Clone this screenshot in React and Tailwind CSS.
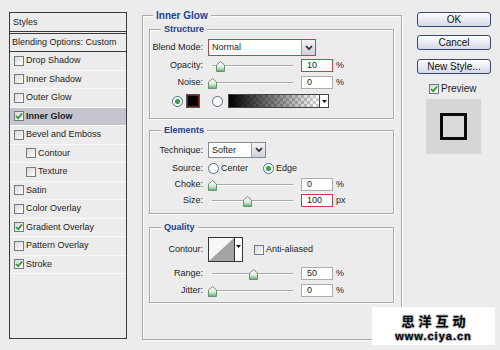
import React from "react";

const Check = ({ checked }) => (
    <span className="w-[10px] h-[10px] border border-[#707a84] bg-linear-to-br from-[#d8d8d8] to-white flex items-center justify-center shrink-0">
        {checked && (
            <svg width="8" height="8" viewBox="0 0 8 8">
                <path d="M1 4 L3.2 6.3 L7 1.4" fill="none" stroke="#1f9a2a" strokeWidth="1.7" />
            </svg>
        )}
    </span>
);

const Radio = ({ on }) => (
    <span className="w-[11px] h-[11px] rounded-full border border-[#4d6f8c] bg-white flex items-center justify-center shrink-0">
        {on && <span className="w-[5px] h-[5px] rounded-full bg-[#3aa048] shadow-[0_0_1px_#8fd39a]" />}
    </span>
);

// pos = thumb centre, px from the slider's left edge
const Slider = ({ pos }) => (
    <div className="relative w-[88px] h-[13px] shrink-0">
        <div className="absolute left-[4px] w-[81px] top-[6px] h-[2px] border-t border-[#a9a9a9] border-b border-b-white" />
        <svg className="absolute top-[2px]" style={{ left: pos - 4 }} width="9" height="11" viewBox="0 0 9 11">
            <defs>
                <linearGradient id="thumbg" x1="0" y1="0" x2="0" y2="1">
                    <stop offset="0" stopColor="#ffffff" />
                    <stop offset="0.6" stopColor="#d6e6d6" />
                    <stop offset="1" stopColor="#4fae5c" />
                </linearGradient>
            </defs>
            <path d="M4.5 0.5 L8.5 4 L8.5 10.5 L0.5 10.5 L0.5 4 Z" fill="url(#thumbg)" stroke="#6f8f74" strokeWidth="1" />
        </svg>
    </div>
);

const Num = ({ v, red }) => (
    <div className={red
        ? "ml-[5px] w-[32px] h-[13px] bg-white border border-[#c2404c] pl-[5px] flex items-center shrink-0"
        : "ml-[5px] w-[32px] h-[13px] bg-white border border-[#a7adb3] pl-[5px] flex items-center shrink-0"}>
        {v}
    </div>
);

const Drop = () => (
    <div className="w-[14px] h-full border-l border-[#9aa0aa] bg-linear-to-b from-[#f4f4f6] to-[#cfd2dc] flex items-center justify-center shrink-0">
        <svg width="8" height="6" viewBox="0 0 8 6">
            <path d="M1 1 L4 4.2 L7 1" fill="none" stroke="#333" strokeWidth="1.8" />
        </svg>
    </div>
);

const Row = ({ label, children, className = "" }) => (
    <div className={"flex items-center " + className}>
        <div className="w-[53px] text-right shrink-0 whitespace-nowrap">{label}</div>
        <div className="ml-[5px] flex items-center">{children}</div>
    </div>
);

const Group = ({ title, className = "", children, legend = "left-[11px] text-[9px]" }) => (
    <div className={"relative border border-[#a9a9a9] shadow-[inset_1px_1px_0_#fff,1px_1px_0_#fff] " + className}>
        <span className={"absolute -top-[6px] px-[3px] bg-[#ececec] font-bold text-[#1b3f93] leading-[11px] " + legend}>
            {title}
        </span>
        {children}
    </div>
);

const Btn = ({ children, className = "" }) => (
    <div className={"w-[74px] h-[15px] rounded-[3px] border border-[#3a4676] bg-linear-to-b from-white to-[#d4d8e6] flex items-center justify-center text-[10px] text-[#111] " + className}>
        {children}
    </div>
);

const styleItems = [
    { name: "Drop Shadow" },
    { name: "Inner Shadow" },
    { name: "Outer Glow" },
    { name: "Inner Glow", checked: true, active: true },
    { name: "Bevel and Emboss" },
    { name: "Contour", sub: true },
    { name: "Texture", sub: true },
    { name: "Satin" },
    { name: "Color Overlay" },
    { name: "Gradient Overlay", checked: true },
    { name: "Pattern Overlay" },
    { name: "Stroke", checked: true },
];

export default function App() {
    return (
        <div className="relative w-[500px] h-[350px] overflow-hidden bg-[#ececec] flex items-start font-['Liberation_Sans',Arial,sans-serif] text-[9px] leading-[11px] text-[#1c1c1c]">
            {/* styles list */}
            <div className="ml-[9px] mt-[12px] w-[118px] h-[327px] border border-[#3a3a3a] shrink-0">
                <div className="h-[19px] border-b border-[#3a3a3a] pl-[3px] flex items-center">Styles</div>
                <div className="mt-[1px] h-[19px] border-t border-b border-[#3a3a3a] pl-[2px] flex items-center">
                    Blending Options: Custom
                </div>
                {styleItems.map(item => (
                    <div
                        key={item.name}
                        className={[
                            "h-[18.5px] flex items-center gap-[2px] border-b border-[#f9f9f9]",
                            item.sub ? "pl-[16px]" : "pl-[4px]",
                            item.active ? "bg-[#c4c4ce] font-bold" : "",
                        ].join(" ")}
                    >
                        <Check checked={item.checked} />
                        <span>{item.name}</span>
                    </div>
                ))}
            </div>

            {/* Inner Glow */}
            <Group title="Inner Glow" legend="left-[10px] text-[10px]" className="ml-[15px] mt-[15px] w-[260px] h-[325px] pt-[13px] pl-[6px] shrink-0">
                <Group title="Structure" className="w-[245px] h-[90px] pt-[9px]">
                    <Row label="Blend Mode:" className="h-[17px]">
                        <div className="w-[108px] h-[17px] bg-white border border-[#c2404c] flex items-center justify-between">
                            <span className="pl-[3px]">Normal</span>
                            <Drop />
                        </div>
                    </Row>
                    <Row label="Opacity:" className="mt-[3px] h-[13px]">
                        <Slider pos={12} />
                        <Num v="10" red />
                        <span className="ml-[3px]">%</span>
                    </Row>
                    <Row label="Noise:" className="mt-[4px] h-[13px]">
                        <Slider pos={4} />
                        <Num v="0" />
                        <span className="ml-[3px]">%</span>
                    </Row>
                    <div className="mt-[5px] h-[14px] pl-[22px] flex items-center">
                        <Radio on />
                        <div className="ml-[3px] w-[14px] h-[14px] border border-[#555] bg-[#0a0000] shadow-[inset_0_0_0_1px_#7a1a1a]" />
                        <div className="ml-[12px]"><Radio /></div>
                        <div className="ml-[5px] w-[101px] h-[14px] border border-[#444] bg-white flex">
                            <svg width="90" height="12" viewBox="0 0 90 12" className="shrink-0">
                                <defs>
                                    <pattern id="chk" width="6" height="6" patternUnits="userSpaceOnUse">
                                        <rect width="6" height="6" fill="#fff" />
                                        <rect width="3" height="3" fill="#cfcfcf" />
                                        <rect x="3" y="3" width="3" height="3" fill="#cfcfcf" />
                                    </pattern>
                                    <linearGradient id="fade" x1="0" y1="0" x2="1" y2="0">
                                        <stop offset="0" stopColor="#000" stopOpacity="1" />
                                        <stop offset="1" stopColor="#000" stopOpacity="0" />
                                    </linearGradient>
                                </defs>
                                <rect width="90" height="12" fill="url(#chk)" />
                                <rect width="90" height="12" fill="url(#fade)" />
                            </svg>
                            <div className="flex-1 border-l border-[#444] flex items-center justify-center">
                                <svg width="5" height="3" viewBox="0 0 5 3"><path d="M0 0 H5 L2.5 3 Z" fill="#111" /></svg>
                            </div>
                        </div>
                    </div>
                </Group>

                <Group title="Elements" className="mt-[11px] w-[245px] h-[84px] pt-[11px]">
                    <Row label="Technique:" className="h-[16px]">
                        <div className="w-[58px] h-[16px] bg-white border border-[#7f8a96] flex items-center justify-between">
                            <span className="pl-[3px]">Softer</span>
                            <Drop />
                        </div>
                    </Row>
                    <Row label="Source:" className="mt-[4px] h-[12px]">
                        <Radio />
                        <span className="ml-[2px]">Center</span>
                        <div className="ml-[15px]"><Radio on /></div>
                        <span className="ml-[2px]">Edge</span>
                    </Row>
                    <Row label="Choke:" className="mt-[4px] h-[13px]">
                        <Slider pos={4} />
                        <Num v="0" />
                        <span className="ml-[3px]">%</span>
                    </Row>
                    <Row label="Size:" className="mt-[3px] h-[13px]">
                        <Slider pos={39} />
                        <Num v="100" red />
                        <span className="ml-[3px]">px</span>
                    </Row>
                </Group>

                <Group title="Quality" className="mt-[13px] w-[245px] h-[76px] pt-[9px]">
                    <Row label="Contour:" className="h-[25px]">
                        <div className="w-[35px] h-[25px] border border-[#333] bg-white flex">
                            <svg width="25" height="23" viewBox="0 0 25 23" className="shrink-0">
                                <rect width="25" height="23" fill="#f7f7f7" />
                                <path d="M0 23 L25 0 L25 23 Z" fill="#a4a4a8" />
                            </svg>
                            <div className="flex-1 border-l border-[#333] flex items-start justify-center pt-[7px]">
                                <svg width="5" height="3" viewBox="0 0 5 3"><path d="M0 0 H5 L2.5 3 Z" fill="#111" /></svg>
                            </div>
                        </div>
                        <div className="ml-[11px]"><Check /></div>
                        <span className="ml-[2px]">Anti-aliased</span>
                    </Row>
                    <Row label="Range:" className="mt-[5px] h-[13px]">
                        <Slider pos={45} />
                        <Num v="50" />
                        <span className="ml-[3px]">%</span>
                    </Row>
                    <Row label="Jitter:" className="mt-[4px] h-[13px]">
                        <Slider pos={4} />
                        <Num v="0" />
                        <span className="ml-[3px]">%</span>
                    </Row>
                </Group>
            </Group>

            {/* buttons + preview */}
            <div className="ml-[15px] mt-[12px] w-[74px] flex flex-col shrink-0">
                <Btn>OK</Btn>
                <Btn className="mt-[8px]">Cancel</Btn>
                <Btn className="mt-[9px]">New Style...</Btn>
                <div className="mt-[9px] pl-[12px] flex items-center gap-[2px] text-[10px]">
                    <Check checked />
                    <span>Preview</span>
                </div>
                <div className="mt-[5px] ml-[9px] w-[55px] h-[55px] bg-[#d6d6d6] flex items-center justify-center">
                    <div className="w-[27px] h-[27px] border-[3px] border-[#0a0a0a] bg-[#d9d9d9]" />
                </div>
            </div>

            {/* watermark */}
            <div className="absolute left-[372px] top-[307px] w-[123px] h-[38px] bg-white flex flex-col items-center pt-[6px]">
                <span className="block h-[15px] font-['Noto_Sans_CJK_SC',sans-serif] font-bold text-[13px] leading-[15px] tracking-[4px] pl-[4px] text-black [text-shadow:1px_0_0_#bbb,-1px_0_0_#bbb,0_1px_0_#bbb,0_-1px_0_#bbb]">
                    思洋互动
                </span>
                <span className="block mt-[3px] h-[10px] font-bold text-[11px] leading-[10px] tracking-[1px] text-black [text-shadow:1px_0_0_#aaa,-1px_0_0_#aaa,0_1px_0_#aaa,0_-1px_0_#aaa]">
                    www.ciya.cn
                </span>
            </div>
        </div>
    );
}
